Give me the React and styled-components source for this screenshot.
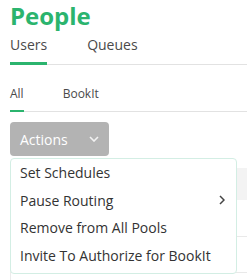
import React from 'react';
import styled, { createGlobalStyle } from 'styled-components';

const GlobalStyle = createGlobalStyle`
  html, body {
    margin: 0;
    padding: 0;
    background: #fff;
    font-family: "Open Sans", "Noto Sans", sans-serif;
    overflow: hidden;
  }
`;

const Page = styled.div`
  position: relative;
  padding-left: 10px;
  width: 237px;
  height: 280px;
  overflow: hidden;
`;

const Title = styled.h1`
  margin: 0;
  font-size: 24px;
  line-height: 32px;
  font-weight: 700;
  color: #2bb46e;
`;

const TabBar = styled.div`
  display: flex;
  gap: ${p => p.gap}px;
  margin-top: ${p => p.top}px;
  border-bottom: 1px solid #e2e2e2;
`;

const Tab = styled.div`
  font-size: ${p => p.size}px;
  line-height: ${p => p.lh}px;
  color: #4a4a4a;
  padding-bottom: ${p => p.pad}px;
  border-bottom: ${p => p.underline}px solid ${p => (p.active ? '#2bb46e' : 'transparent')};
  margin-bottom: -1px;
`;

const ActionsButton = styled.button`
  display: flex;
  align-items: center;
  justify-content: space-between;
  margin-top: 10px;
  width: 99px;
  height: 34px;
  padding: 0 10px;
  border: none;
  border-radius: 4px;
  background: #b3b3b3;
  color: #fff;
  font-family: inherit;
  font-size: 14px;
`;

const Table = styled.div`
  margin-top: 12px;
  border-left: 1px solid #ececec;
`;

const HeadRow = styled.div`
  height: 32px;
  background: #f3f3f3;
`;

const Row = styled.div`
  height: ${p => p.h}px;
  border-bottom: 1px solid #e9e9e9;
`;

const Menu = styled.ul`
  position: absolute;
  left: 10px;
  top: 158px;
  width: 225px;
  margin: 0;
  padding: 0 0 4px;
  list-style: none;
  background: #fff;
  border: 1px solid #d3eee4;
  border-radius: 4px;
`;

const MenuItem = styled.li`
  display: flex;
  align-items: center;
  justify-content: space-between;
  height: 27.5px;
  padding: 0 11px 0 9px;
  font-size: 14px;
  color: #333;
  white-space: nowrap;
`;

const ChevronDown = () => (
  <svg width="10" height="6" viewBox="0 0 10 6">
    <polyline points="1,1 5,5 9,1" fill="none" stroke="#f2f2f2" strokeWidth="1.6" />
  </svg>
);

const ChevronRight = () => (
  <svg width="6" height="10" viewBox="0 0 6 10">
    <polyline points="1,1 5,5 1,9" fill="none" stroke="#444" strokeWidth="1.5" />
  </svg>
);

const items = [
  { label: 'Set Schedules' },
  { label: 'Pause Routing', sub: true },
  { label: 'Remove from All Pools' },
  { label: 'Invite To Authorize for BookIt' },
];

export default function App() {
  return (
    <Page>
      <GlobalStyle />
      <Title>People</Title>
      <TabBar gap={40} top={3}>
        <Tab size={14} lh={19} pad={8} underline={3} active>Users</Tab>
        <Tab size={14} lh={19} pad={8} underline={3}>Queues</Tab>
      </TabBar>
      <TabBar gap={39} top={21}>
        <Tab size={12} lh={16} pad={8} underline={2} active>All</Tab>
        <Tab size={12} lh={16} pad={8} underline={2}>BookIt</Tab>
      </TabBar>
      <ActionsButton>
        <span>Actions</span>
        <ChevronDown />
      </ActionsButton>
      <Table>
        <HeadRow />
        <Row h={36} />
        <Row h={35} />
        <Row h={35} />
      </Table>
      <Menu>
        {items.map(it => (
          <MenuItem key={it.label}>
            {it.label}
            {it.sub && <ChevronRight />}
          </MenuItem>
        ))}
      </Menu>
    </Page>
  );
}
